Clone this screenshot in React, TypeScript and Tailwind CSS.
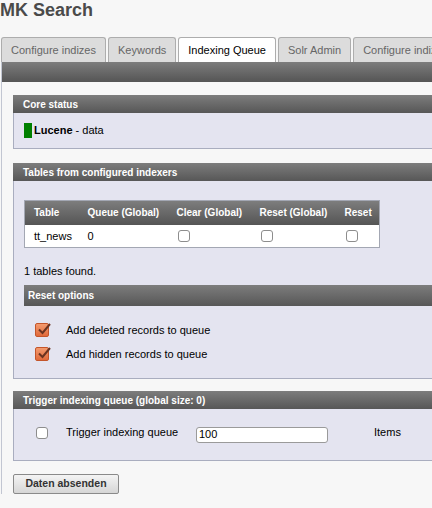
import React from "react";

const tabs = ["Configure indizes", "Keywords", "Indexing Queue", "Solr Admin", "Configure indizes"];

function PanelHead({ title }: { title: string }) {
  return (
    <div className="flex h-[18px] items-center bg-gradient-to-b from-[#7d7d7d] to-[#575757] pl-[10px] text-[10px] font-bold text-white">
      {title}
    </div>
  );
}

function Box() {
  return <span className="block h-[12px] w-[12px] rounded-[3px] border border-[#8d8d8d] bg-white" />;
}

function OrangeCheck() {
  return (
    <span className="relative block h-[14px] w-[14px] rounded-[2px] border border-[#c4552a] bg-gradient-to-b from-[#f39a6e] to-[#e0693a]">
      <svg viewBox="0 0 16 16" className="absolute -top-[3px] left-0 h-[16px] w-[16px]">
        <path d="M3 8.5 L6.5 12 L14 3" fill="none" stroke="#6b3320" strokeWidth="2" />
      </svg>
    </span>
  );
}

export default function App() {
  return (
    <div className="h-[508px] w-[432px] overflow-hidden bg-[#f7f7f7] text-[11px] text-black [font-family:'Liberation_Sans',Arial,sans-serif]">
      <h1 className="h-[37px] text-[18px] leading-[20px] font-bold text-[#4a4a4a]">MK Search</h1>

      {/* tabs */}
      <div className="flex h-[25px] w-[470px] gap-[2px] pl-px whitespace-nowrap">
        {tabs.map((t, i) => (
          <div
            key={i}
            className={`flex shrink-0 items-center rounded-t-[3px] border border-b-0 border-[#adadad] px-[9px] text-[11px] ${
              i === 2 ? "bg-white text-black" : "bg-[#dcdcdc] text-[#666]"
            }`}
          >
            {t}
          </div>
        ))}
      </div>

      <div className="ml-px border-l border-[#c2c6d2]">
        <div className="h-[20px] bg-gradient-to-b from-[#7d7d7d] to-[#555]" />

        <div className="ml-[11px] w-[440px] pt-[13px]">
          {/* core status */}
          <PanelHead title="Core status" />
          <div className="flex h-[36px] items-center border border-t-0 border-[#a9adbf] bg-[#e4e4f0] pl-[10px]">
            <span className="mr-[2px] h-[15px] w-[8px] bg-[#008000]" />
            <b>Lucene</b>&nbsp;- data
          </div>

          {/* tables */}
          <div className="mt-[14px]">
            <PanelHead title="Tables from configured indexers" />
            <div className="h-[198px] border border-t-0 border-[#a9adbf] bg-[#e4e4f0] pl-[10px] pt-[19px]">
              <table className="w-[356px] table-fixed border border-[#a3a7b3] bg-white text-left">
                <thead>
                  <tr className="h-[24px] bg-gradient-to-b from-[#7d7d7d] to-[#555] text-[10px] text-white">
                    <th className="w-[63px] pl-[9px] font-bold">Table</th>
                    <th className="w-[89px] font-bold">Queue (Global)</th>
                    <th className="w-[83px] font-bold">Clear (Global)</th>
                    <th className="w-[85px] font-bold">Reset (Global)</th>
                    <th className="font-bold">Reset</th>
                  </tr>
                </thead>
                <tbody>
                  <tr className="h-[23px]">
                    <td className="pl-[9px]">tt_news</td>
                    <td>0</td>
                    <td className="pl-px"><Box /></td>
                    <td className="pl-px"><Box /></td>
                    <td className="pl-px"><Box /></td>
                  </tr>
                </tbody>
              </table>
              <div className="mt-[15px] h-[14px]">1 tables found.</div>
              <div className="mt-[8px] flex h-[21px] items-center bg-gradient-to-b from-[#7d7d7d] to-[#575757] pl-[4px] text-[10px] font-bold text-white">
                Reset options
              </div>
              <div className="mt-[16px] flex items-center pl-[11px]">
                <OrangeCheck />
                <span className="ml-[17px]">Add deleted records to queue</span>
              </div>
              <div className="mt-[7px] flex items-center pl-[11px]">
                <OrangeCheck />
                <span className="ml-[17px]">Add hidden records to queue</span>
              </div>
            </div>
          </div>

          {/* trigger */}
          <div className="mt-[12px]">
            <PanelHead title="Trigger indexing queue (global size: 0)" />
            <div className="flex h-[52px] items-center border border-t-0 border-[#a9adbf] bg-[#e4e4f0] pl-[22px]">
              <span className="mb-[3px]"><Box /></span>
              <span className="mb-[4px] ml-[18px] w-[130px]">Trigger indexing queue</span>
              <input
                readOnly
                value="100"
                className="h-[16px] w-[132px] rounded-[3px] border border-[#9a9a9a] bg-white px-[2px] text-[11px] outline-none"
              />
              <span className="mb-[4px] ml-[46px]">Items</span>
            </div>
          </div>

          <button className="mt-[13px] h-[20px] w-[106px] rounded-[2px] border border-[#8a8a8a] bg-gradient-to-b from-[#f4f4f4] to-[#d6d6d6] text-[10.5px] font-bold text-[#333]">
            Daten absenden
          </button>
        </div>
      </div>
    </div>
  );
}
